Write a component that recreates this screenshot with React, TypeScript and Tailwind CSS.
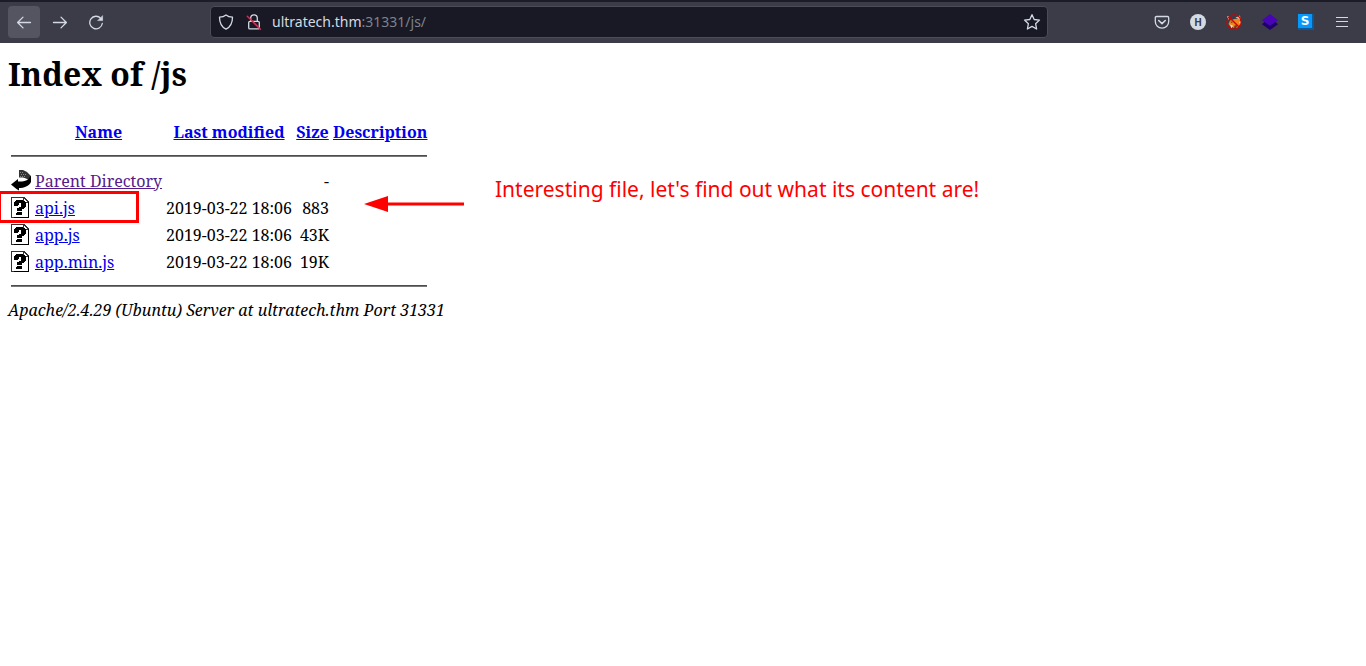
import React from "react";

type Entry = { name: string; href: string; modified: string; size: string; parent?: boolean };

const entries: Entry[] = [
  { name: "Parent Directory", href: "#parent", modified: "", size: "-", parent: true },
  { name: "api.js", href: "#api", modified: "2019-03-22 18:06", size: "883" },
  { name: "app.js", href: "#app", modified: "2019-03-22 18:06", size: "43K" },
  { name: "app.min.js", href: "#app-min", modified: "2019-03-22 18:06", size: "19K" },
];

const line = {
  fill: "none",
  stroke: "currentColor",
  strokeWidth: 1.3,
  strokeLinecap: "round" as const,
  strokeLinejoin: "round" as const,
};

function BackIcon() {
  return (
    <svg width="16" height="16" viewBox="0 0 16 16" {...line}>
      <path d="M14.5 8.500H1.8M7 3.100 1.6 8.500 7 13.900" />
    </svg>
  );
}

function ForwardIcon() {
  return (
    <svg width="16" height="16" viewBox="0 0 16 16" {...line}>
      <path d="M1.5 8.500h12.7M9 3.100 14.4 8.500 9 13.900" />
    </svg>
  );
}

function ReloadIcon() {
  return (
    <svg width="16" height="16" viewBox="0 0 16 16" {...line}>
      <path d="M12.800 4.400A6.300 6.300 0 1 0 14.300 9.500" />
      <path d="M14.600 2v4.600H10z" fill="currentColor" strokeWidth="0.6" />
    </svg>
  );
}

function ShieldIcon() {
  return (
    <svg width="16" height="16" viewBox="0 0 16 16" {...line}>
      <path d="M8 .9c1.900 1.500 4.100 2.100 6.500 2.300 0 5.300-1.500 9.500-6.500 12C3 12.700 1.500 8.500 1.500 3.200 3.900 3 6.100 2.400 8 .9z" />
    </svg>
  );
}

function InsecureLockIcon() {
  return (
    <svg width="16" height="16" viewBox="0 0 16 16" {...line}>
      <path d="M4.700 7.300V4.200a3.300 3.300 0 0 1 6.600 0v3.100" />
      <rect x="2.700" y="7.300" width="10.600" height="7.600" rx="1.200" />
      <path d="M1.300 2.200 14.400 15.200" stroke="#e22850" strokeWidth="1.500" />
    </svg>
  );
}

function StarIcon() {
  return (
    <svg width="18" height="18" viewBox="0 0 18 18" {...line}>
      <path d="m9 1.700 2.200 4.800 5.300.6-3.900 3.600 1 5.300L9 13.400 4.400 16l1-5.300L1.500 7.100l5.300-.6z" />
    </svg>
  );
}

function PocketIcon() {
  return (
    <svg width="16" height="16" viewBox="0 0 16 16" {...line}>
      <path d="M2.600 2.500h10.800c.8 0 1.300.5 1.300 1.200V7.500a6.700 6.700 0 0 1-13.400 0V3.700c0-.7.500-1.200 1.300-1.200z" />
      <path d="M4.700 6.500 8 9.600l3.300-3.100" strokeWidth="1.600" />
    </svg>
  );
}

function FoxIcon() {
  return (
    <svg width="16" height="16" viewBox="0 0 16 16">
      <path d="M4 6.500 8.500 5l5-.5 1 5-2.500 4-4 .5-4-2-1.500-2z" fill="#ef8518" />
      <path d="M9.500 3.500 14 1.500 14.500 6l-3-1.500z" fill="#e8b48a" />
      <path d="m1 2.500 2.500-.5-1 4zM4 10.500l3 1-1.500 3zM13 8l2-1-.5 4z" fill="#e6d8cf" />
      <path d="m8.500 11.500 3-.5-1.500 3H8zM4.500 7.500l2.500.5-1.500 1z" fill="#6a3a20" />
      <circle cx="8" cy="8" r="7.200" fill="none" stroke="#c80606" strokeWidth="1.200" />
      <path d="m3 3 10 10" stroke="#c80606" strokeWidth="1.400" />
    </svg>
  );
}

function LayersIcon() {
  return (
    <svg width="16" height="16" viewBox="0 0 16 16">
      <path d="M0 10.300 2.500 8h11l2.500 2.300L8 16z" fill="#20006d" />
      <path d="m8 0 8 6.200-8 5.500-8-5.500z" fill="#4805b5" />
    </svg>
  );
}

function MenuIcon() {
  return (
    <svg width="16" height="16" viewBox="0 0 16 16" stroke="currentColor" strokeWidth="1">
      <path d="M2 3.500h12M2 7.500h12M2 12.500h12" />
    </svg>
  );
}

function ParentIcon() {
  return (
    <svg width="20" height="22" viewBox="0 0 20 22" className="block">
      <path d="M8 0h4l4 2 3 3 .5 3-1.500 2L15 8.500 12 7.500H8z" fill="#333" />
      <path d="M9 2h1v1H9zm2 0h1v1h-1zm-1 2h1v1h-1zm2 0h1v1h-1zm2 0h1v1h-1zM9 6h1v1H9zm2 0h1v1h-1zm2 0h1v1h-1z" fill="#888" />
      <path d="M0 14.500 7 9v2.500c4 .3 8-.5 10.500-2.500L20 5v7c-2 4-7 6-12 6v2.500L5.500 19z" fill="#000" />
    </svg>
  );
}

function UnknownIcon() {
  return (
    <svg width="20" height="22" viewBox="0 0 20 22" className="block" shapeRendering="crispEdges">
      <path d="M0 0h13l5 5v16H0z" fill="#333" />
      <path d="M1 1h11v5h5v14H1z" fill="#fff" />
      <path d="M13 2h1v1h1v1h1v1h-3z" fill="#fff" />
      <path d="M17 5h1v16H3v-1h14z" fill="#000" />
      <path d="M5 3h7v1h2v1h1v5h-1v1h-1v1h-2v2H6v-3h2v-1h2V6H8v2H7v1H3V5h1V4h1zM6 15h5v3H5v-2h1z" fill="#000" />
    </svg>
  );
}

const toolButton = "flex h-8 w-8 items-center justify-center rounded-sm";

function Toolbar() {
  return (
    <header className="flex h-[43px] items-center border-t-2 border-[#1b1c27] bg-[#3b3c47] px-2 pb-0.5 text-[#d3dae3]">
      <nav className="flex gap-1" aria-label="History">
        <button className={`${toolButton} bg-[#545560]`} aria-label="Back"><BackIcon /></button>
        <button className={toolButton} aria-label="Forward"><ForwardIcon /></button>
        <button className={toolButton} aria-label="Reload"><ReloadIcon /></button>
      </nav>
      <div className="ml-[98px] flex h-8 max-w-[838px] flex-1 items-center rounded border border-[#4b4c58] bg-[#181925] pr-1.5 pl-[7px]">
        <ShieldIcon />
        <span className="ml-3 flex"><InsecureLockIcon /></span>
        <a href="#address" className="ml-[10px] flex-1 font-['Noto_Sans',sans-serif] text-sm text-[#7d828e]">
          <span className="text-[#d3dae3]">ultratech.thm</span>:31331/js/
        </a>
        <button aria-label="Bookmark this page"><StarIcon /></button>
      </div>
      <div className="ml-auto flex gap-1">
        <button className={toolButton} aria-label="Pocket"><PocketIcon /></button>
        <button className={toolButton} aria-label="Account">
          <span className="flex h-4 w-4 items-center justify-center rounded-full bg-[#d3dae3] font-['Noto_Sans',sans-serif] text-[10px] leading-4 font-bold text-[#3b3c47]">H</span>
        </button>
        <button className={toolButton} aria-label="Fox extension"><FoxIcon /></button>
        <button className={toolButton} aria-label="Layers extension"><LayersIcon /></button>
        <button className={toolButton} aria-label="S extension">
          <span className="flex h-4 w-4 items-center justify-center border-r-2 border-b-2 border-[#075a9b] bg-[#0798fb] font-['DejaVu_Sans',sans-serif] text-xs leading-3 font-bold text-white">S</span>
        </button>
        <button className={toolButton} aria-label="Menu"><MenuIcon /></button>
      </div>
    </header>
  );
}

const link = "text-[#0000ee] underline";

function RuleRow() {
  return (
    <tr>
      <td colSpan={5} className="h-5 p-px align-middle">
        <hr className="h-0.5 border-0 border-t border-b border-t-[#4d4d4d] border-b-[#777]" />
      </td>
    </tr>
  );
}

function Listing() {
  return (
    <table className="w-[422px] table-fixed border-separate border-spacing-0.5 whitespace-nowrap">
      <colgroup>
        <col className="w-[22px]" />
        <col className="w-[129px]" />
        <col className="w-[128px]" />
        <col className="w-[35px]" />
        <col className="w-24" />
      </colgroup>
      <thead>
        <tr className="h-6">
          <th className="p-px" />
          <th className="p-px"><a href="#name" className={link}>Name</a></th>
          <th className="p-px"><a href="#modified" className={link}>Last modified</a></th>
          <th className="p-px"><a href="#size" className={link}>Size</a></th>
          <th className="p-px"><a href="#description" className={link}>Description</a></th>
        </tr>
      </thead>
      <tbody>
        <RuleRow />
        {entries.map((e) => (
          <tr key={e.name} className="h-[25px]">
            <td className="p-px">{e.parent ? <ParentIcon /> : <UnknownIcon />}</td>
            <td className="p-px">
              <a href={e.href} className={e.parent ? "text-[#551a8b] underline" : link}>{e.name}</a>
            </td>
            <td className="p-px text-right">{e.modified}</td>
            <td className="p-px text-right">{e.size}</td>
            <td className="p-px" />
          </tr>
        ))}
        <RuleRow />
      </tbody>
    </table>
  );
}

export default function App() {
  return (
    <div className="min-h-screen bg-white text-black">
      <Toolbar />
      <main className="relative px-2 pt-[9px] font-['Noto_Serif','Liberation_Serif',serif] text-base leading-[22px]">
        <h1 className="mb-[22px] text-[32px] leading-[44px] font-bold">Index of /js</h1>
        <Listing />
        <address className="mt-px">Apache/2.4.29 (Ubuntu) Server at ultratech.thm Port 31331</address>
        <div className="absolute top-[148px] left-[-2px] h-8 w-[141px] border-3 border-[#ff0000]" />
        <svg className="absolute top-[153px] left-[364px]" width="100" height="16" viewBox="0 0 100 16" fill="#ff0000">
          <path d="M0 8 24 0v6.500h76v3H24V16z" />
        </svg>
        <p className="absolute top-[132px] left-[495px] font-['Noto_Sans',sans-serif] text-[21px] leading-7 whitespace-nowrap text-[#ff0000]">
          Interesting file, let's find out what its content are!
        </p>
      </main>
    </div>
  );
}
